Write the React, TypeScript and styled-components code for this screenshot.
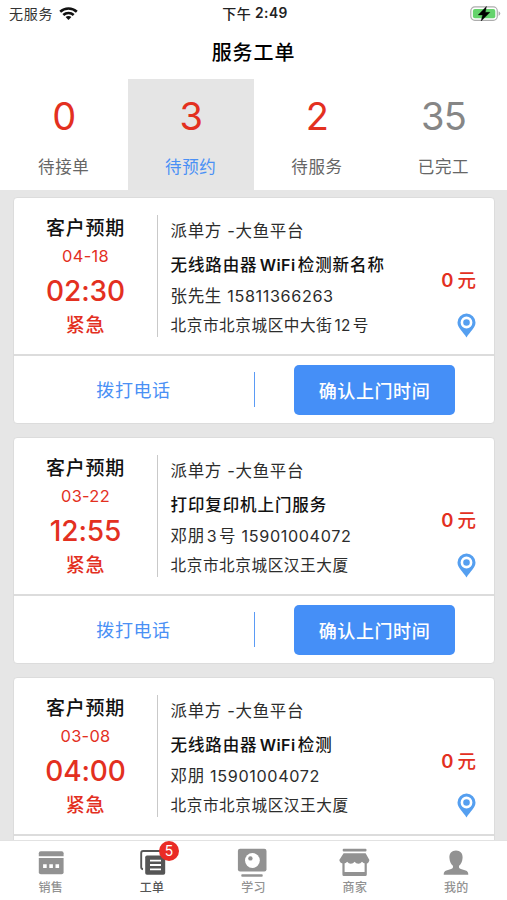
import React from "react";
import styled, { createGlobalStyle } from "styled-components";

const Global = createGlobalStyle`
  * { box-sizing: border-box; }
  html, body { margin: 0; padding: 0; background: #fff; }
  body { font-family: Inter, "Noto Sans CJK SC", sans-serif; color: #1c1c1c; overflow: hidden; }
`;

const Screen = styled.div`
  width: 507px;
  height: 900px;
  display: flex;
  flex-direction: column;
  overflow: hidden;
  background: #fff;
`;

const StatusBar = styled.div`
  height: 27px;
  flex: none;
  display: grid;
  grid-template-columns: 1fr auto 1fr;
  align-items: center;
  padding: 0 6px 0 9px;
  font-size: 14px;
  line-height: 27px;
`;

const Carrier = styled.div`
  display: flex;
  align-items: center;
  gap: 6px;
  letter-spacing: 0.8px;
  color: #333;
`;

const Clock = styled.div`
  display: flex;
  gap: 4px;
  font-size: 14px;
  font-weight: 500;
  color: #222;
  letter-spacing: 0.4px;
`;

const ClockDigits = styled.span`
  font-size: 13.8px;
  font-weight: 600;
`;

const BatterySlot = styled.div`
  display: flex;
  justify-content: flex-end;
`;

const Title = styled.h1`
  margin: 0;
  flex: none;
  height: 52px;
  line-height: 53px;
  text-align: center;
  font-size: 20px;
  font-weight: 500;
  letter-spacing: 0.9px;
  color: #000;
`;

const Stats = styled.div`
  flex: none;
  height: 111px;
  display: grid;
  grid-template-columns: 127.5px 126.5px 126px 127px;
`;

const Stat = styled.div<{ $active?: boolean }>`
  display: flex;
  flex-direction: column;
  align-items: center;
  padding-top: 13px;
  background: ${(p) => (p.$active ? "#e5e5e5" : "#fff")};
`;

const StatCount = styled.div<{ $muted?: boolean }>`
  height: 48px;
  line-height: 49px;
  font-size: 38px;
  font-weight: 400;
  letter-spacing: -0.8px;
  color: ${(p) => (p.$muted ? "#868686" : "#e3301f")};
`;

const StatLabel = styled.div<{ $active?: boolean }>`
  height: 24px;
  margin-top: 15px;
  line-height: 24px;
  font-size: 16.5px;
  letter-spacing: 0.6px;
  color: ${(p) => (p.$active ? "#4a90f5" : "#666")};
`;

const Feed = styled.main`
  flex: 1;
  min-height: 0;
  overflow: hidden;
  display: flex;
  flex-direction: column;
  gap: 13px;
  padding: 6.6px 12px 0 13px;
  background: #e6e6e6;
`;

const Card = styled.article`
  flex: none;
  height: 227.3px;
  background: #fff;
  border: 1px solid #dcdcdc;
  border-radius: 4px;
`;

const CardBody = styled.div`
  height: 158px;
  display: grid;
  grid-template-columns: 144px 1fr 61px;
  padding-top: 17px;
  border-bottom: 2px solid #dcdcdc;
`;

const Schedule = styled.div`
  height: 122px;
  display: flex;
  flex-direction: column;
  align-items: center;
  border-right: 1px solid #c9c9c9;
  color: #e3301f;
`;

const ScheduleTitle = styled.div`
  height: 27px;
  line-height: 27px;
  font-size: 19px;
  font-weight: 500;
  letter-spacing: 0.8px;
  color: #111;
`;

const ScheduleDate = styled.div`
  height: 28px;
  line-height: 28px;
  font-size: 16.4px;
  letter-spacing: 0.3px;
`;

const ScheduleTime = styled.div`
  height: 40px;
  line-height: 42px;
  font-size: 28px;
  font-weight: 550;
  letter-spacing: -0.1px;
`;

const Urgency = styled.div`
  height: 28px;
  line-height: 31px;
  font-size: 19px;
  font-weight: 500;
  letter-spacing: 0.8px;
`;

const Details = styled.div`
  display: flex;
  flex-direction: column;
  padding-left: 12.5px;
  white-space: nowrap;
`;

const Line = styled.div<{ $height: number; $strong?: boolean; $tight?: boolean }>`
  height: ${(p) => p.$height}px;
  line-height: ${(p) => p.$height}px;
  font-size: ${(p) => (p.$tight ? 15.6 : 16.5)}px;
  letter-spacing: ${(p) => (p.$strong ? 0.9 : p.$tight ? 0.6 : 0.65)}px;
  font-weight: ${(p) => (p.$strong ? 500 : 400)};
  color: ${(p) => (p.$strong ? "#111" : "#2c2c2c")};
`;

const Latin = styled.span<{ $size?: number; $gap?: number; $bold?: boolean }>`
  font-size: ${(p) => p.$size ?? 16}px;
  font-weight: ${(p) => (p.$bold ? 600 : "inherit")};
  letter-spacing: 0.4px;
  margin: 0 ${(p) => p.$gap ?? 0}px;
`;

const Phone = styled.span`
  font-size: 16.2px;
  letter-spacing: 0.62px;
`;

const Side = styled.div`
  display: flex;
  flex-direction: column;
  align-items: flex-end;
  padding: 52.5px 18px 0 0;
`;

const Price = styled.div`
  height: 26px;
  line-height: 26px;
  font-size: 18.5px;
  font-weight: 500;
  white-space: nowrap;
  color: #e3301f;
  display: flex;
  gap: 4px;
`;

const Amount = styled.span`
  font-weight: 600;
`;

const PinSlot = styled.div`
  margin-top: 19.5px;
  height: 25px;
`;

const CardActions = styled.div`
  height: 67px;
  display: grid;
  grid-template-columns: 240px 1px 1fr;
  align-items: center;
`;

const CallLink = styled.a`
  text-align: center;
  padding-right: 1px;
  font-size: 18px;
  letter-spacing: 0.6px;
  color: #4a90f5;
`;

const ActionRule = styled.span`
  height: 35px;
  width: 1px;
  background: #5b9bf5;
`;

const ConfirmButton = styled.button`
  justify-self: start;
  margin: 1px 0 0 39px;
  width: 161px;
  height: 50px;
  padding: 0;
  border: 0;
  border-radius: 5px;
  background: #458ff7;
  color: #fff;
  font: 500 18px Inter, "Noto Sans CJK SC", sans-serif;
  letter-spacing: 0.6px;
`;

const NavBar = styled.nav`
  flex: none;
  height: 60px;
  display: grid;
  grid-template-columns: repeat(5, 1fr);
  border-top: 1px solid #e2e2e2;
  background: #fff;
`;

const NavItem = styled.a<{ $active?: boolean }>`
  display: flex;
  flex-direction: column;
  align-items: center;
  padding-top: 6px;
  color: ${(p) => (p.$active ? "#555" : "#929292")};
  font-size: 12px;
`;

const NavIcon = styled.div`
  position: relative;
  width: 32px;
  height: 32px;
`;

const NavLabel = styled.span`
  height: 16px;
  margin-top: 1px;
  line-height: 16px;
  letter-spacing: 0.3px;
  font-weight: 500;
`;

const Badge = styled.span`
  position: absolute;
  left: 23px;
  top: -6.5px;
  width: 20px;
  height: 20px;
  border-radius: 50%;
  background: #ea2b25;
  color: #fff;
  font-size: 14px;
  line-height: 20px;
  text-align: center;
`;

const WifiIcon = () => (
  <svg width="19" height="14" viewBox="0 0 19 14" fill="none" stroke="#111" strokeWidth="2.6">
    <path d="M1.2 4.7C5.8.4 13.2.4 17.8 4.7" />
    <path d="M4.3 8C7.2 5.3 11.8 5.3 14.7 8" />
    <path d="M9.5 13.1L6.6 10.1C8.2 8.7 10.8 8.7 12.4 10.1Z" fill="#111" stroke="none" />
  </svg>
);

const BatteryIcon = () => (
  <svg width="31" height="16" viewBox="0 0 31 16">
    <rect x="0.8" y="0.9" width="26.5" height="13.4" rx="4" fill="#fff" stroke="#adadad" strokeWidth="1.2" />
    <rect x="2.9" y="3" width="22.4" height="9.2" rx="2" fill="#65d36c" />
    <path d="M28.6 5.3V9.9Q30.3 9.1 30.3 7.6Q30.3 6.1 28.6 5.3Z" fill="#adadad" />
    <path d="M16.4 0.4L8.2 8.9H12.6L11.2 15L19.9 6.3H15.3Z" fill="#000" stroke="#000" strokeWidth="0.4" />
  </svg>
);

const PinIcon = () => (
  <svg width="19" height="25" viewBox="0 0 19 25">
    <path d="M9.5 0.5A9 9 0 0 0 0.5 9.5C0.5 15 6 18.5 9.5 24.5C13 18.5 18.5 15 18.5 9.5A9 9 0 0 0 9.5 0.5Z" fill="#559ff0" />
    <circle cx="9.5" cy="9.5" r="4.6" fill="none" stroke="#fff" strokeWidth="2.6" />
  </svg>
);

const SalesIcon = () => (
  <svg width="32" height="32" viewBox="0 0 32 32" fill="currentColor">
    <path d="M3.8 9.3V6.3Q3.8 4.3 5.8 4.3H26.6Q28.6 4.3 28.6 6.3V9.3Z" />
    <path d="M3.8 11H28.6V25.2Q28.6 27.2 26.6 27.2H5.8Q3.8 27.2 3.8 25.2Z" />
    <path fill="#fff" d="M8.1 17.3h3.6v3.8H8.1zM14.3 17.3h3.6v3.8H14.3zM20.5 17.3h3.6v3.8h-3.6z" />
  </svg>
);

const OrdersIcon = () => (
  <svg width="32" height="32" viewBox="0 0 32 32">
    <path d="M7 22.2Q5.2 22 5.2 20V6Q5.2 4 7.2 4H24Q26 4 26 6V8" fill="none" stroke="currentColor" strokeWidth="1.9" />
    <rect x="9.2" y="8.4" width="20" height="19.4" rx="1.8" fill="currentColor" />
    <path d="M14 13.6H25M14 18H25M14 22.4H25" stroke="#fff" strokeWidth="1.8" />
  </svg>
);

const LearnIcon = () => (
  <svg width="32" height="32" viewBox="0 0 32 32" fill="currentColor">
    <rect x="0.9" y="1.8" width="28.6" height="22.6" rx="2.2" />
    <circle cx="15.4" cy="13.5" r="7.4" fill="#fff" />
    <circle cx="13.4" cy="11.4" r="2.2" />
    <rect x="4.3" y="27.2" width="21.4" height="2.6" rx="0.8" />
  </svg>
);

const ShopIcon = () => (
  <svg width="32" height="32" viewBox="0 0 32 32" fill="currentColor">
    <rect x="3.7" y="1.8" width="23.8" height="2.8" rx="1" />
    <path d="M4.6 6.3H26.6L30.4 13Q29.7 16.8 26.6 16.6Q24.2 16.6 23 14.8Q21.5 16.8 19.4 16.8Q17 16.8 15.6 14.8Q14.2 16.8 11.8 16.8Q9.6 16.8 8.2 14.8Q7 16.6 4.6 16.6Q1 16.6 0.3 13Z" />
    <path d="M4.5 15.5V27.4Q4.5 27.9 5 27.9H26.2Q26.7 27.9 26.7 27.4V15.5" fill="none" stroke="currentColor" strokeWidth="2.2" />
    <path d="M4.5 26.8H26.7" fill="none" stroke="currentColor" strokeWidth="3.6" />
  </svg>
);

const PersonIcon = () => (
  <svg width="32" height="32" viewBox="0 0 32 32" fill="currentColor">
    <path d="M16 3.4C11.7 3.4 9.2 6.3 9.4 10.7C9.6 14.6 11.2 17.4 12.9 18.8C13.3 20.8 12.7 21.5 11.1 22L6.4 23.4C4.5 24.1 3.7 25 3.7 27.7H28.3C28.3 25 27.5 24.1 25.6 23.4L20.9 22C19.3 21.5 18.7 20.8 19.1 18.8C20.8 17.4 22.4 14.6 22.6 10.7C22.8 6.3 20.3 3.4 16 3.4Z" />
  </svg>
);

interface Order {
  date: string;
  time: string;
  service: React.ReactNode;
  contact: React.ReactNode;
  phone: string;
  address: React.ReactNode;
}

const orders: Order[] = [
  {
    date: "04-18",
    time: "02:30",
    service: <>无线路由器<Latin $gap={2.3} $bold>WiFi</Latin>检测新名称</>,
    contact: "张先生",
    phone: "15811366263",
    address: <>北京市北京城区中大街<Latin $size={15.3} $gap={2}>12</Latin>号</>,
  },
  {
    date: "03-22",
    time: "12:55",
    service: "打印复印机上门服务",
    contact: <>邓朋<Latin $gap={2}>3</Latin>号</>,
    phone: "15901004072",
    address: "北京市北京城区汉王大厦",
  },
  {
    date: "03-08",
    time: "04:00",
    service: <>无线路由器<Latin $gap={2.3} $bold>WiFi</Latin>检测</>,
    contact: "邓朋",
    phone: "15901004072",
    address: "北京市北京城区汉王大厦",
  },
];

const stats = [
  { count: 0, label: "待接单" },
  { count: 3, label: "待预约", active: true },
  { count: 2, label: "待服务" },
  { count: 35, label: "已完工", muted: true },
];

const navItems = [
  { label: "销售", icon: <SalesIcon /> },
  { label: "工单", icon: <OrdersIcon />, active: true, badge: 5 },
  { label: "学习", icon: <LearnIcon /> },
  { label: "商家", icon: <ShopIcon /> },
  { label: "我的", icon: <PersonIcon /> },
];

const OrderCard = ({ order }: { order: Order }) => (
  <Card>
    <CardBody>
      <Schedule>
        <ScheduleTitle>客户预期</ScheduleTitle>
        <ScheduleDate>{order.date}</ScheduleDate>
        <ScheduleTime>{order.time}</ScheduleTime>
        <Urgency>紧急</Urgency>
      </Schedule>
      <Details>
        <Line $height={32}>派单方 -大鱼平台</Line>
        <Line $height={37} $strong>{order.service}</Line>
        <Line $height={24}>{order.contact} <Phone>{order.phone}</Phone></Line>
        <Line $height={36} $tight>{order.address}</Line>
      </Details>
      <Side>
        <Price><Amount>0</Amount><span>元</span></Price>
        <PinSlot><PinIcon /></PinSlot>
      </Side>
    </CardBody>
    <CardActions>
      <CallLink>拨打电话</CallLink>
      <ActionRule />
      <ConfirmButton>确认上门时间</ConfirmButton>
    </CardActions>
  </Card>
);

export default function App() {
  return (
    <>
      <Global />
      <Screen>
        <StatusBar>
          <Carrier>无服务<WifiIcon /></Carrier>
          <Clock><span>下午</span><ClockDigits>2:49</ClockDigits></Clock>
          <BatterySlot><BatteryIcon /></BatterySlot>
        </StatusBar>
        <Title>服务工单</Title>
        <Stats>
          {stats.map((s) => (
            <Stat key={s.label} $active={s.active}>
              <StatCount $muted={s.muted}>{s.count}</StatCount>
              <StatLabel $active={s.active}>{s.label}</StatLabel>
            </Stat>
          ))}
        </Stats>
        <Feed>
          {orders.map((o) => (
            <OrderCard key={o.date} order={o} />
          ))}
        </Feed>
        <NavBar>
          {navItems.map((n) => (
            <NavItem key={n.label} $active={n.active}>
              <NavIcon>
                {n.icon}
                {n.badge && <Badge>{n.badge}</Badge>}
              </NavIcon>
              <NavLabel>{n.label}</NavLabel>
            </NavItem>
          ))}
        </NavBar>
      </Screen>
    </>
  );
}
